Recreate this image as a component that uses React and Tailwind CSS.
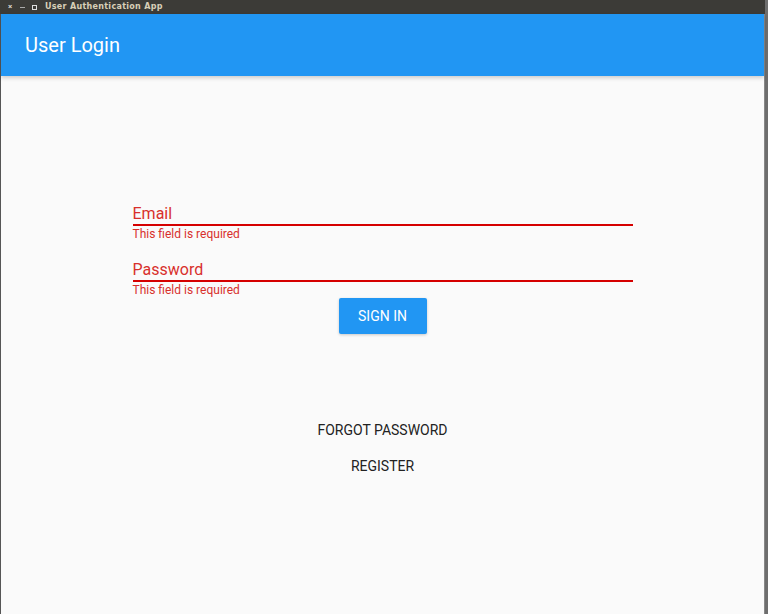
import React from "react";

const ErrorField = ({ label }) => (
    <div className="w-[500px]">
        <div className="h-[20px] text-[16px] leading-[20px] text-[#d8302c]">{label}</div>
        <div className="h-[2px] bg-[#d50000]" />
        <div className="h-[14px] text-[12px] leading-[14px] text-[#d8302c] pt-[1px]">This field is required</div>
    </div>
);

export default function App() {
    return (
        <div className="w-[768px] h-[614px] bg-[#6e6e6e] flex flex-col overflow-hidden" style={{ fontFamily: "Roboto, 'Liberation Sans', sans-serif" }}>
            {/* window title bar */}
            <div className="h-[14px] bg-[#3c3b37] flex items-center text-[#dcd8cf] w-[765px] shrink-0">
                <span className="ml-[6px] w-[8px] text-[8px] leading-none font-bold text-center">×</span>
                <span className="ml-[6px] w-[5px] h-[1px] bg-[#aaa]" />
                <span className="ml-[7px] w-[5px] h-[5px] border border-[#ddd]" />
                <span className="ml-[8px] text-[8px] font-semibold tracking-[0.3px] text-[#d8cfb8]" style={{ fontFamily: "'DejaVu Sans', sans-serif" }}>User Authentication App</span>
            </div>

            <div className="flex-1 flex w-[765px] border-l border-[#555] border-r border-r-[#888]">
                <div className="flex-1 bg-[#fafafa] flex flex-col">
                    <header className="h-[62px] bg-[#2196f3] flex items-center pl-[24px] text-white text-[20px] font-normal shadow-[0_2px_4px_rgba(0,0,0,0.18)] relative">
                        User Login
                    </header>

                    <main className="flex flex-col items-center pt-[128px]">
                        <ErrorField label="Email" />
                        <div className="h-[20px]" />
                        <ErrorField label="Password" />
                        <button className="mt-[2px] w-[88px] h-[36px] bg-[#2196f3] text-white text-[14px] font-normal rounded-[2px] shadow-[0_1px_3px_rgba(0,0,0,0.2)]">
                            SIGN IN
                        </button>
                        <button className="mt-[78px] h-[36px] px-[16px] text-[14px] font-normal text-[#222]">FORGOT PASSWORD</button>
                        <button className="h-[36px] px-[16px] text-[14px] font-normal text-[#222]">REGISTER</button>
                    </main>
                </div>
            </div>
        </div>
    );
}
